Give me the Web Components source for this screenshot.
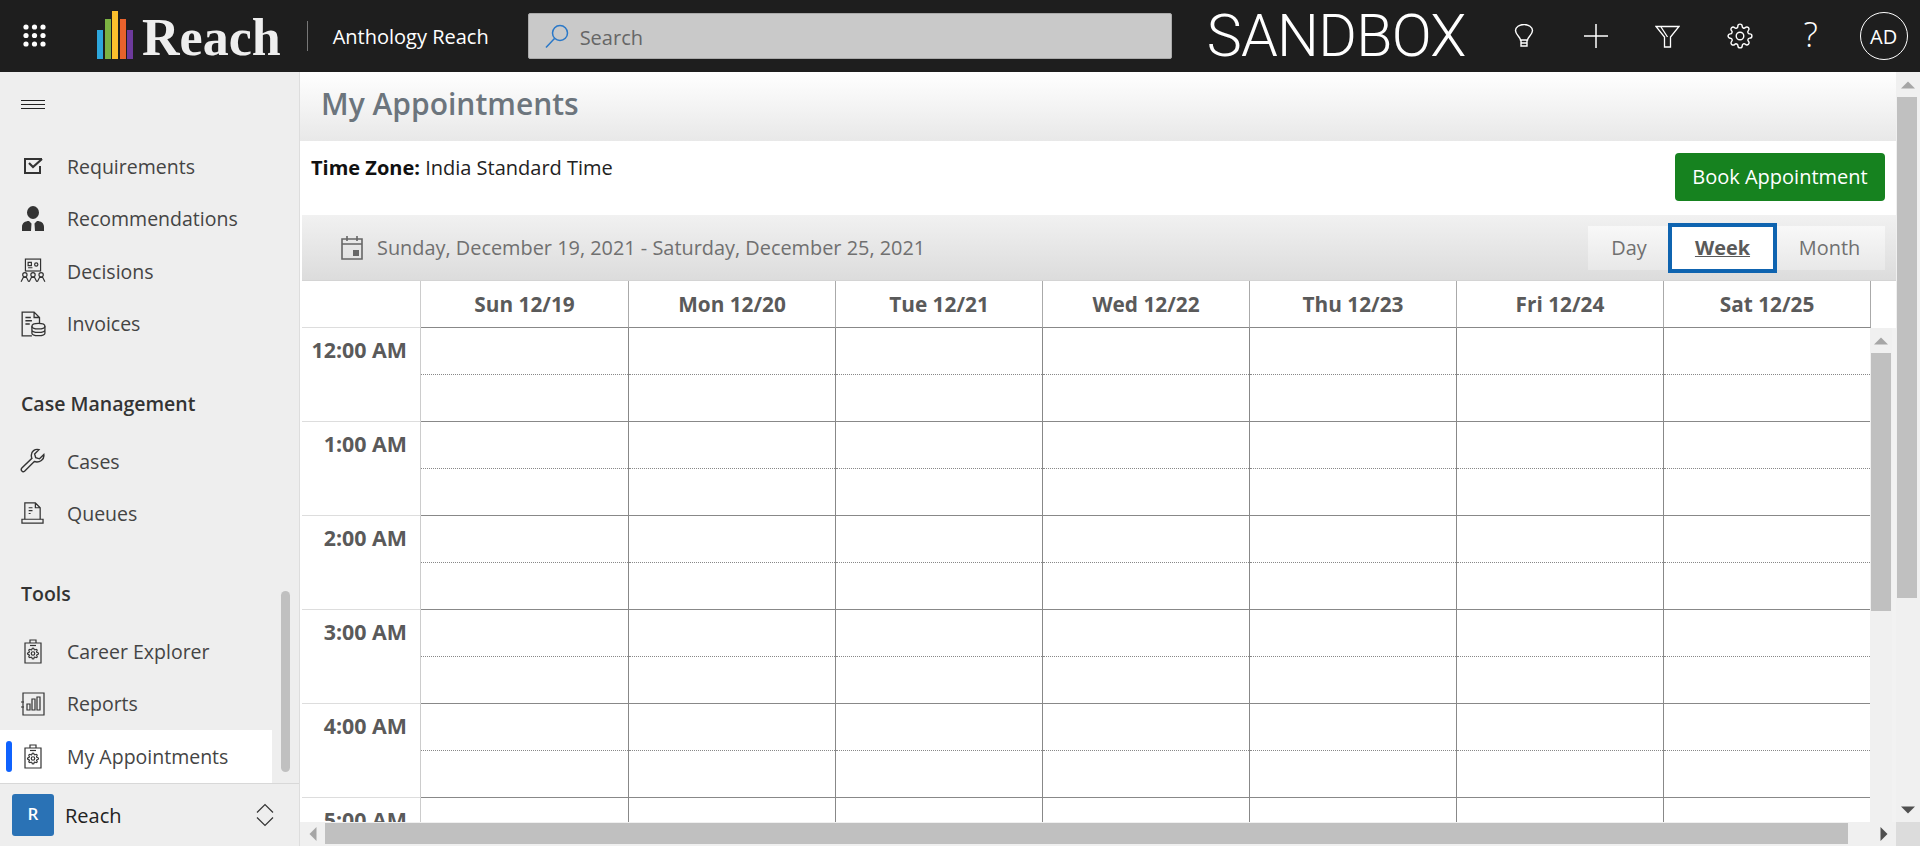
<!DOCTYPE html>
<html>
<head>
<meta charset="utf-8">
<title>My Appointments</title>
<style>
  html, body { margin: 0; height: 100%; overflow: hidden; background: #fff; }
  body { font-family: "Open Sans", "Noto Sans", sans-serif; }
</style>
</head>
<body>
<reach-app></reach-app>
<script>
const GEAR = "M19.4 15a1.65 1.65 0 0 0 .33 1.82l.06.06a2 2 0 0 1 0 2.83 2 2 0 0 1-2.83 0l-.06-.06a1.65 1.65 0 0 0-1.82-.33 1.65 1.65 0 0 0-1 1.51V21a2 2 0 0 1-2 2 2 2 0 0 1-2-2v-.09A1.65 1.65 0 0 0 9 19.4a1.65 1.65 0 0 0-1.82.33l-.06.06a2 2 0 0 1-2.83 0 2 2 0 0 1 0-2.83l.06-.06a1.65 1.65 0 0 0 .33-1.82 1.65 1.65 0 0 0-1.51-1H3a2 2 0 0 1-2-2 2 2 0 0 1 2-2h.09A1.65 1.65 0 0 0 4.6 9a1.65 1.65 0 0 0-.33-1.82l-.06-.06a2 2 0 0 1 0-2.83 2 2 0 0 1 2.83 0l.06.06a1.65 1.65 0 0 0 1.82.33H9a1.65 1.65 0 0 0 1-1.51V3a2 2 0 0 1 2-2 2 2 0 0 1 2 2v.09a1.65 1.65 0 0 0 1 1.51 1.65 1.65 0 0 0 1.82-.33l.06-.06a2 2 0 0 1 2.83 0 2 2 0 0 1 0 2.83l-.06.06a1.65 1.65 0 0 0-.33 1.82V9a1.65 1.65 0 0 0 1.51 1H21a2 2 0 0 1 2 2 2 2 0 0 1-2 2h-.09a1.65 1.65 0 0 0-1.51 1z";

// nav icons
const CLIPBOARD = `<svg viewBox="0 0 18 25" width="18" height="25" fill="none" stroke="#333" stroke-width="1.200"><path d="M6 4V1h6v3M1 4h16v20H1z"/><path d="M6 6.500h6"/><g transform="translate(3 8.500) scale(.5)" stroke-width="2.400"><circle cx="12" cy="12" r="3.500"/><path d="${GEAR}"/></g></svg>`;
const ICONS = {
  requirements: `<svg viewBox="0 0 24 24" width="24" height="24" fill="none" stroke="#333"><path d="M21 5H4v14h15v-7" stroke-width="2"/><path d="M8 9l4 4 9-8" stroke-width="2.200"/></svg>`,
  recommendations: `<svg viewBox="0 0 24 26" width="24" height="26" fill="#333"><ellipse cx="12" cy="6.500" rx="6" ry="6.500"/><path d="M1 25v-4c0-4 3-6 7-6l2.500 2.500L10 25zM23 25v-4c0-4-3-6-7-6l-2.500 2.500L14 25z"/></svg>`,
  decisions: `<svg viewBox="0 0 24 24" width="26" height="26" fill="none" stroke="#333" stroke-width="1.100"><rect x="5" y="1" width="14" height="11"/><path d="M7.500 9h4M7.500 4h3v3h-3z"/><circle cx="15" cy="6" r="1.500"/><circle cx="4.500" cy="15.500" r="2"/><circle cx="12" cy="15.500" r="2"/><circle cx="19.500" cy="15.500" r="2"/><path d="M1 22l2-4h3l2 4M8.500 22l2-4h3l2 4M16 22l2-4h3l2 4"/></svg>`,
  invoices: `<svg viewBox="0 0 24 24" width="26" height="26" fill="none" stroke="#333" stroke-width="1.200"><path d="M11 23H2V1h11l5 5v5M13 1v5h5"/><path d="M5 6h5M5 9h6M5 12h4"/><ellipse cx="17" cy="14" rx="6" ry="2.500"/><path d="M11 14v6.500c0 3 12 3 12 0V14M11 17.500c0 3 12 3 12 0"/></svg>`,
  cases: `<svg viewBox="0 0 24 24" width="26" height="26" fill="none" stroke="#333" stroke-width="1.300"><path d="M22 6l-4 4-3.500-1-1-3.500 4-4c-3.500-1-7.500 1.500-7 6 0 1 .2 1.500.5 2L1.700 18.500c-1.500 1.500.5 4.500 2.500 3l9-9c5 1.500 9.500-2 8.800-6.500z"/></svg>`,
  queues: `<svg viewBox="0 0 24 24" width="23" height="23" fill="none" stroke="#333" stroke-width="1.300"><path d="M4 18V1h11l5 5v12M15 1v5h5"/><path d="M8 6h4M8 9h4M8 12h2"/><path d="M1 18h22v4H1z"/></svg>`,
  career: CLIPBOARD,
  reports: `<svg viewBox="0 0 24 24" width="24" height="24" fill="none" stroke="#333" stroke-width="1.200"><path d="M2 1h21v22H2z"/><path d="M6 18h3v-6H6zM11 18h3V7h-3zM16 18h3V5h-3z"/><path d="M0 10h3M0 15h3"/></svg>`,
  appointments: CLIPBOARD
};

class ScrollBar extends HTMLElement {
  constructor() {
    super();
    const horizontal = this.getAttribute("dir") === "h";
    const before = +this.getAttribute("before");
    const size = +this.getAttribute("size");
    const after = +this.getAttribute("after");
    const arrowStart = horizontal ? "M7 0L0 7l7 7z" : "M0 7L7 0l7 7z";
    const arrowEnd = horizontal ? "M0 0l7 7-7 7z" : "M0 0l7 7 7-7z";
    const w = horizontal ? 8 : 14;
    const h = horizontal ? 14 : 8;
    const box = `0 0 ${horizontal ? 7 : 14} ${horizontal ? 14 : 7}`;
    const end = after
      ? `<div class="arrow end"><svg width="${w}" height="${h}" viewBox="${box}"><path fill="#505050" d="${arrowEnd}"/></svg></div>`
      : "";
    const root = this.attachShadow({ mode: "open" });
    root.innerHTML = `
      <style>
        :host { display: flex; flex-direction: ${horizontal ? "row" : "column"}; background: #f0f0f0; flex: none; box-sizing: border-box; }
        .arrow { flex: none; display: flex; align-items: center; justify-content: center; ${horizontal ? "width" : "height"}: ${before}px; }
        .arrow.end { ${horizontal ? "width" : "height"}: ${after}px; }
        .thumb { flex: none; background: #c0c0c0; ${horizontal ? "width" : "height"}: ${size}px; ${horizontal ? "height: 21px; margin-top: 1px" : "width: 20px; margin-left: 1px"}; }
        .gap { flex: 1; }
      </style>
      <div class="arrow"><svg width="${w}" height="${h}" viewBox="${box}"><path fill="#a6a6a6" d="${arrowStart}"/></svg></div>
      <div class="thumb"></div>
      <div class="gap"></div>
      ${end}
    `;
  }
}

class ReachHeader extends HTMLElement {
  constructor() {
    super();
    const root = this.attachShadow({ mode: "open" });
    const dots = [];
    for (let y = 0; y < 3; y++) for (let x = 0; x < 3; x++) dots.push(`<circle cx="${3 + x * 8.500}" cy="${3 + y * 8.500}" r="2.600"/>`);
    root.innerHTML = `
      <style>
        :host { display: flex; align-items: center; height: 72px; background: #1e1e1e; color: #fff; flex: none; font-family: "Open Sans", sans-serif; }
        .apps { margin-left: 23px; width: 24px; height: 24px; display: block; }
        .bars { margin-left: 50px; display: flex; align-items: flex-end; gap: 1.500px; height: 49px; align-self: flex-start; margin-top: 10px; }
        .bars i { display: block; width: 6px; }
        .word { font: bold 52px "Liberation Serif", serif; color: #eee; margin-left: 9px; margin-top: 2px; }
        .rule { width: 1px; height: 30px; background: #777; margin-left: 26px; }
        .product { font-size: 20px; margin-left: 25px; width: 195px; white-space: nowrap; }
        .search { width: 644px; height: 46px; box-sizing: border-box; background: #c9c9c9; border: 1px solid #aaa; border-radius: 2px; display: flex; align-items: center; color: #666; font-size: 20px; padding-left: 16px; gap: 11px; }
        .search span { position: relative; top: 1px; }
        .env { font-family: Roboto, sans-serif; font-size: 59px; font-weight: 300; margin-left: 35px; width: 307px; letter-spacing: -.7px; line-height: 1.172; white-space: nowrap; }
        .tool { flex: none; display: block; }
        .q { font-size: 34px; font-weight: 300; width: 16px; text-align: center; line-height: 1.360; margin-top: -3px; }
        .avatar { margin-left: 41px; width: 48px; height: 48px; box-sizing: border-box; border: 1px solid #fff; border-radius: 50%; display: flex; align-items: center; justify-content: center; font-size: 20px; }
      </style>
      <svg class="apps" viewBox="0 0 24 24" fill="#fff">${dots.join("")}</svg>
      <div class="bars">
        <i style="height:29px;background:#2da7dc"></i>
        <i style="height:40px;background:#7cb342"></i>
        <i style="height:48px;background:#fbc02d"></i>
        <i style="height:40px;background:#e8622c"></i>
        <i style="height:29px;background:#6d3a9c"></i>
      </div>
      <span class="word">Reach</span>
      <span class="rule"></span>
      <span class="product">Anthology Reach</span>
      <div class="search">
        <svg width="24" height="25" viewBox="0 0 24 25" fill="none" stroke="#2a78c8" stroke-width="1.500"><circle cx="15" cy="9" r="7.500"/><path d="M9.500 14.500L1 23.500"/></svg>
        <span>Search</span>
      </div>
      <span class="env">SANDBOX</span>
      <svg class="tool" width="20" height="24" viewBox="0 0 20 24" fill="none" stroke="#fff" stroke-width="1.400"><path d="M6.500 16c0-3-5-5-5-9.500a8.500 6 0 0 1 17 0c0 4.500-5 6.500-5 9.500zM7 16v6h6v-6M7 19h6"/></svg>
      <svg class="tool" style="margin-left:50px" width="24" height="24" viewBox="0 0 24 24" fill="none" stroke="#fff" stroke-width="1.500"><path d="M12 0v24M0 12h24"/></svg>
      <svg class="tool" style="margin-left:47px" width="25" height="23" viewBox="0 0 25 23" fill="none" stroke="#fff" stroke-width="1.300"><path d="M1 1.500h23L15.500 12v10h-6V12zM6 2l6.500 10"/></svg>
      <svg class="tool" style="margin-left:47px" width="26" height="26" viewBox="0 0 24 24" fill="none" stroke="#fff" stroke-width="1.300"><circle cx="12" cy="12" r="3.500"/><path d="${GEAR}"/></svg>
      <span class="tool q" style="margin-left:50px">?</span>
      <div class="avatar">AD</div>
    `;
  }
}

class NavItem extends HTMLElement {
  constructor() {
    super();
    const root = this.attachShadow({ mode: "open" });
    root.innerHTML = `
      <style>
        :host { display: flex; align-items: center; height: 52.500px; width: 272px; color: #444; font-size: 19.500px; position: relative; }
        :host([active]) { background: #fff; }
        :host([active])::before { content: ""; position: absolute; left: 6px; top: 11px; width: 6px; height: 31px; background: #0f62fe; border-radius: 3px; }
        .icon { width: 67px; flex: none; display: flex; justify-content: center; box-sizing: border-box; padding-right: 2px; }
        svg { display: block; }
      </style>
      <div class="icon">${ICONS[this.getAttribute("icon")]}</div>
      <span><slot></slot></span>
    `;
  }
}

class NavHeading extends HTMLElement {
  constructor() {
    super();
    const root = this.attachShadow({ mode: "open" });
    root.innerHTML = `
      <style>
        :host { display: flex; align-items: flex-end; box-sizing: border-box; padding: 0 0 18px 21px; font-weight: 600; font-size: 19.500px; color: #333; height: 85px; }
      </style>
      <slot></slot>
    `;
  }
}

class ReachSidebar extends HTMLElement {
  constructor() {
    super();
    const root = this.attachShadow({ mode: "open" });
    root.innerHTML = `
      <style>
        :host { display: flex; flex-direction: column; width: 300px; flex: none; background: #eee; border-right: 1px solid #ddd; box-sizing: border-box; position: relative; }
        .menu { height: 66px; margin-bottom: 2px; display: flex; align-items: center; padding-left: 21px; flex: none; }
        .list { flex: 1; }
        .thumb { position: absolute; left: 281px; top: 519px; width: 9px; height: 181px; background: #c0c0c0; border-radius: 5px; }
        .foot { height: 64px; flex: none; border-top: 1px solid #d8d8d8; box-sizing: border-box; display: flex; align-items: center; padding-left: 12px; font-size: 20px; color: #222; }
        .tile { width: 42px; height: 42px; background: #2a72b5; color: #fff; border-radius: 3px; display: flex; align-items: center; justify-content: center; font-size: 17px; font-weight: 600; margin-right: 11px; padding-bottom: 4px; box-sizing: border-box; }
        .foot span { padding-top: 1px; }
        .chev { margin-left: auto; margin-right: 25px; display: block; }
      </style>
      <div class="menu"><svg width="24" height="12" viewBox="0 0 24 12" stroke="#222" stroke-width="1"><path d="M0 1.500h24M0 5.500h24M0 9.500h24"/></svg></div>
      <div class="list"><slot></slot></div>
      <div class="thumb"></div>
      <div class="foot">
        <div class="tile">R</div>
        <span>Reach</span>
        <svg class="chev" width="18" height="24" viewBox="0 0 18 24" fill="none" stroke="#333" stroke-width="1.200"><path d="M1 9.500L9 1.500l8 8M1 14.500l8 8 8-8"/></svg>
      </div>
    `;
  }
}

class CalToolbar extends HTMLElement {
  constructor() {
    super();
    const root = this.attachShadow({ mode: "open" });
    root.innerHTML = `
      <style>
        :host { display: flex; align-items: center; height: 66px; flex: none; margin-left: 2px; background: linear-gradient(#f1f1f1, #dcdcdc); border-bottom: 1px solid #d4d4d4; box-sizing: border-box; color: #707070; font-size: 19.900px; }
        svg { margin-left: 39px; margin-right: 14px; display: block; }
        .views { margin-left: auto; margin-right: 11px; display: flex; align-items: center; height: 50px; }
        .v { height: 44px; display: flex; align-items: center; justify-content: center; background: linear-gradient(#f8f8f8, #e8e8e8); box-sizing: border-box; }
        .day { width: 80px; padding-left: 2px; }
        .month { width: 108px; padding-right: 3px; }
        .week { width: 109px; height: 50px; background: #fff; border: 4px solid #0f64b0; font-weight: 700; color: #5a5a5a; text-decoration: underline; }
      </style>
      <svg width="22" height="24" viewBox="0 0 22 24" fill="none" stroke="#666" stroke-width="1.600"><path d="M1 3h20v20H1zM1 8h20M6 0v5M16 0v5"/><rect x="12" y="14" width="6" height="6" fill="#666" stroke="none"/></svg>
      <span>Sunday, December 19, 2021 - Saturday, December 25, 2021</span>
      <div class="views">
        <div class="v day">Day</div>
        <div class="v week">Week</div>
        <div class="v month">Month</div>
      </div>
    `;
  }
}

class WeekGrid extends HTMLElement {
  constructor() {
    super();
    const root = this.attachShadow({ mode: "open" });
    const days = ["Sun 12/19", "Mon 12/20", "Tue 12/21", "Wed 12/22", "Thu 12/23", "Fri 12/24", "Sat 12/25"];
    const hours = ["12:00 AM", "1:00 AM", "2:00 AM", "3:00 AM", "4:00 AM", "5:00 AM"];
    const tracks = "119px 208px repeat(6, 207px)";
    const head = days.map((d) => `<div class="day">${d}</div>`).join("");
    const rows = hours.map((h) => {
      const cells = days.map(() => `<div class="slot"></div>`).join("");
      return `<div class="time">${h}</div>${cells}`;
    }).join("");
    root.innerHTML = `
      <style>
        :host { display: flex; flex-direction: column; flex: 1; min-height: 0; margin-left: 2px; background: #fff; color: #5a5a5a; font-weight: 700; font-size: 20.800px; }
        .head { display: grid; grid-template-columns: ${tracks}; height: 47px; flex: none; width: 1569px; }
        .corner { border-right: 1px solid #ccc; border-bottom: 1px solid #ddd; }
        .day { display: flex; align-items: center; justify-content: center; border-right: 1px solid #aaa; border-bottom: 1px solid #888; }
        .scroll { flex: 1; min-height: 0; display: flex; }
        .body { flex: 1; overflow: hidden; }
        .grid { display: grid; grid-template-columns: ${tracks}; grid-auto-rows: 94px; width: 1569px; }
        .time { text-align: right; padding: 8px 13px 0 0; box-sizing: border-box; border-right: 1px solid #ccc; border-bottom: 1px solid #ddd; font-size: 21.400px; line-height: 28px; white-space: nowrap; }
        .slot { box-sizing: border-box; border-right: 1px solid #888; border-bottom: 1px solid #888; }
        .slot::before { content: ""; display: block; height: 46px; border-bottom: 1px dotted #888; }
        .strip { width: 4px; flex: none; background: #f2f2f2; }
        scroll-bar { width: 22px; }
      </style>
      <div class="head"><div class="corner"></div>${head}</div>
      <div class="scroll">
        <div class="body"><div class="grid">${rows}</div></div>
        <scroll-bar before="25" size="258" after="0"></scroll-bar>
        <div class="strip"></div>
      </div>
    `;
  }
}

class ReachApp extends HTMLElement {
  constructor() {
    super();
    const root = this.attachShadow({ mode: "open" });
    root.innerHTML = `
      <style>
        :host { display: flex; flex-direction: column; width: 1920px; height: 846px; overflow: hidden; font-family: "Open Sans", "Noto Sans", sans-serif; }
        .under { flex: 1; display: flex; min-height: 0; }
        .main { flex: 1; display: flex; min-width: 0; }
        .content { flex: 1; display: flex; flex-direction: column; min-width: 0; }
        .title { height: 69px; flex: none; box-sizing: border-box; background: linear-gradient(#fff, #e8e8e8); font-size: 30px; font-weight: 600; color: #6c757d; display: flex; align-items: center; padding: 0 0 7px 21px; }
        .zone { height: 74px; flex: none; display: flex; justify-content: space-between; padding: 12px 11px 0 11px; box-sizing: border-box; font-size: 20px; color: #222; line-height: 30px; }
        .zone b { color: #111; }
        .book { width: 210px; height: 48px; background: #16821f; color: #fff; border-radius: 4px; display: flex; align-items: center; justify-content: center; flex: none; }
        .page-col { width: 24px; flex: none; display: flex; flex-direction: column; }
        .page-bar { flex: 1; width: 24px; }
        .corner { height: 24px; flex: none; background: #dcdcdc; }
        .h-bar { height: 24px; background: #f0f0f0; }
      </style>
      <reach-header></reach-header>
      <div class="under">
        <reach-sidebar>
          <nav-item icon="requirements">Requirements</nav-item>
          <nav-item icon="recommendations">Recommendations</nav-item>
          <nav-item icon="decisions">Decisions</nav-item>
          <nav-item icon="invoices">Invoices</nav-item>
          <nav-heading>Case Management</nav-heading>
          <nav-item icon="cases">Cases</nav-item>
          <nav-item icon="queues">Queues</nav-item>
          <nav-heading>Tools</nav-heading>
          <nav-item icon="career">Career Explorer</nav-item>
          <nav-item icon="reports">Reports</nav-item>
          <nav-item icon="appointments" active>My Appointments</nav-item>
        </reach-sidebar>
        <div class="main">
          <div class="content">
            <div class="title">My Appointments</div>
            <div class="zone"><div><b>Time Zone:</b> India Standard Time</div><div class="book">Book Appointment</div></div>
            <cal-toolbar></cal-toolbar>
            <week-grid></week-grid>
            <scroll-bar class="h-bar" dir="h" before="25" size="1523" after="24"></scroll-bar>
          </div>
          <div class="page-col">
            <scroll-bar class="page-bar" before="25" size="501" after="24"></scroll-bar>
            <div class="corner"></div>
          </div>
        </div>
      </div>
    `;
  }
}

customElements.define("scroll-bar", ScrollBar);
customElements.define("reach-header", ReachHeader);
customElements.define("nav-item", NavItem);
customElements.define("nav-heading", NavHeading);
customElements.define("reach-sidebar", ReachSidebar);
customElements.define("cal-toolbar", CalToolbar);
customElements.define("week-grid", WeekGrid);
customElements.define("reach-app", ReachApp);
</script>
</body>
</html>
